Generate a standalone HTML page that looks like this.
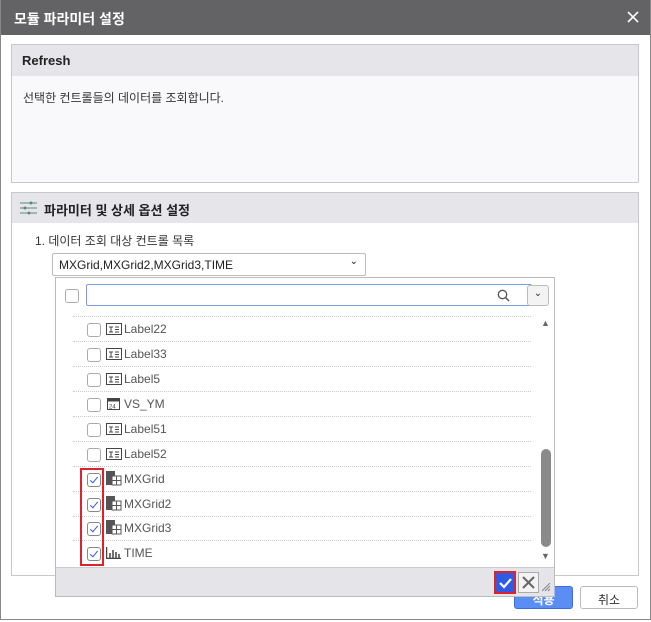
<!DOCTYPE html>
<html><head><meta charset="utf-8"><style>
*{box-sizing:border-box;margin:0;padding:0}
body{width:651px;height:622px;background:#fff;font-family:"Liberation Sans","Noto Sans CJK KR",sans-serif;font-size:12px;color:#333;position:relative;overflow:hidden}
.abs{position:absolute}
.title{left:0;top:0;width:651px;height:35px;background:#636365;color:#fff;font-size:14px;font-weight:bold;padding:9px 0 0 14px}
.frame{left:0;top:0;width:651px;height:620px;border:1px solid #888;border-top:none}
.box{border:1px solid #c8c8cc;background:#f9f9fb}
.hdr{background:#e6e5ea;font-weight:bold;font-size:13px;color:#222}
.cb{width:14px;height:14px;border:1px solid #aaa;border-radius:3px;background:#fff}
.row{left:73px;width:458px;height:25px;border-bottom:1px dotted #ccc}
.row .cb{position:absolute;left:14px;top:6px}
.row span{position:absolute;left:51px;top:5px;font-size:12px;color:#555}
.ico{position:absolute;left:33px;top:6px;width:16px;height:12px}
.ck{border-color:#888}
.ck::after{content:"";position:absolute;left:4px;top:1px;width:3px;height:7px;border:solid #2d5be3;border-width:0 1.6px 1.6px 0;transform:rotate(40deg)}
</style></head><body>
<div class="abs title">모듈 파라미터 설정<svg style="position:absolute;right:12px;top:11px" width="12" height="12"><path d="M1 1l10 10M11 1L1 11" stroke="#fff" stroke-width="1.6"/></svg></div>
<div class="abs frame"></div>

<div class="abs box" style="left:11px;top:44px;width:628px;height:139px"></div>
<div class="abs hdr" style="left:12px;top:45px;width:626px;height:31px;padding:8px 0 0 10px">Refresh</div>
<div class="abs" style="left:23px;top:89px">선택한 컨트롤들의 데이터를 조회합니다.</div>

<div class="abs box" style="left:11px;top:192px;width:628px;height:384px;background:#fff"></div>
<div class="abs hdr" style="left:12px;top:193px;width:626px;height:30px;padding:7px 0 0 32px">파라미터 및 상세 옵션 설정</div>
<svg class="abs" style="left:20px;top:201px" width="17" height="14"><g stroke="#5a8a7a" stroke-width="1"><line x1="0" y1="2" x2="17" y2="2"/><line x1="0" y1="7" x2="17" y2="7"/><line x1="0" y1="12" x2="17" y2="12"/></g><g fill="#5a8a7a"><circle cx="11" cy="2" r="1.5"/><circle cx="5" cy="7" r="1.5"/><circle cx="9" cy="12" r="1.5"/></g></svg>
<div class="abs" style="left:35px;top:232px">1. 데이터 조회 대상 컨트롤 목록</div>
<div class="abs" style="left:52px;top:253px;width:314px;height:23px;border:1px solid #bbb;border-radius:2px;padding:4px 0 0 6px;color:#222">MXGrid,MXGrid2,MXGrid3,TIME<span style="position:absolute;right:7px;top:2px;font-size:10px">⌄</span></div>

<div class="abs" style="left:514px;top:586px;width:59px;height:23px;background:#5b8ef5;border:1px solid #3a6ee0;border-radius:3px;color:#fff;text-align:center;padding-top:4px;font-weight:bold">적용</div>
<div class="abs" style="left:580px;top:586px;width:58px;height:23px;border:1px solid #bbb;border-radius:3px;text-align:center;padding-top:4px">취소</div>

<div class="abs" style="left:55px;top:277px;width:500px;height:320px;background:#fff;border:1px solid #bbb"></div>
<div class="abs cb" style="left:65px;top:289px"></div>
<div class="abs" style="left:86px;top:284px;width:446px;height:22px;border:1px solid #7b9be6;border-radius:2px"></div>
<svg class="abs" style="left:497px;top:289px" width="13" height="13"><circle cx="5.5" cy="5.5" r="4.2" fill="none" stroke="#555" stroke-width="1.3"/><line x1="8.5" y1="8.5" x2="12" y2="12" stroke="#555" stroke-width="1.5"/></svg>
<div class="abs" style="left:527px;top:285px;width:22px;height:21px;border:1px solid #bbb;border-radius:3px;background:#f3f3f3;text-align:center;font-size:10px;line-height:16px">⌄</div>
<div class="abs" style="left:73px;top:316px;width:458px;border-top:1px dotted #ccc"></div>

<div class="abs row" style="top:317px"><div class="cb"></div><svg class="ico"><rect x="0.5" y="0.5" width="15" height="11" fill="none" stroke="#444"/><path d="M3 4h4M5 4v5M3 9h4M9 4h4M9 6.5h4M9 9h4" stroke="#444"/></svg><span>Label22</span></div>
<div class="abs row" style="top:342px"><div class="cb"></div><svg class="ico"><rect x="0.5" y="0.5" width="15" height="11" fill="none" stroke="#444"/><path d="M3 4h4M5 4v5M3 9h4M9 4h4M9 6.5h4M9 9h4" stroke="#444"/></svg><span>Label33</span></div>
<div class="abs row" style="top:367px"><div class="cb"></div><svg class="ico"><rect x="0.5" y="0.5" width="15" height="11" fill="none" stroke="#444"/><path d="M3 4h4M5 4v5M3 9h4M9 4h4M9 6.5h4M9 9h4" stroke="#444"/></svg><span>Label5</span></div>
<div class="abs row" style="top:392px"><div class="cb"></div><svg class="ico" style="top:4px;height:15px"><rect x="1.5" y="2.5" width="12" height="11" fill="none" stroke="#444"/><rect x="1.5" y="2.5" width="12" height="3" fill="#444"/><text x="3" y="12.5" font-size="6" fill="#444" font-family="Liberation Sans">24</text></svg><span>VS_YM</span></div>
<div class="abs row" style="top:417px"><div class="cb"></div><svg class="ico"><rect x="0.5" y="0.5" width="15" height="11" fill="none" stroke="#444"/><path d="M3 4h4M5 4v5M3 9h4M9 4h4M9 6.5h4M9 9h4" stroke="#444"/></svg><span>Label51</span></div>
<div class="abs row" style="top:442px"><div class="cb"></div><svg class="ico"><rect x="0.5" y="0.5" width="15" height="11" fill="none" stroke="#444"/><path d="M3 4h4M5 4v5M3 9h4M9 4h4M9 6.5h4M9 9h4" stroke="#444"/></svg><span>Label52</span></div>
<div class="abs row" style="top:467px"><div class="cb ck"></div><svg class="ico" style="top:4px;height:15px"><rect x="0" y="0" width="9" height="14" fill="#555"/><rect x="6" y="5" width="9" height="9" fill="#fff" stroke="#555"/><path d="M6 9.5h9M10.5 5v9" stroke="#555"/></svg><span>MXGrid</span></div>
<div class="abs row" style="top:492px"><div class="cb ck"></div><svg class="ico" style="top:4px;height:15px"><rect x="0" y="0" width="9" height="14" fill="#555"/><rect x="6" y="5" width="9" height="9" fill="#fff" stroke="#555"/><path d="M6 9.5h9M10.5 5v9" stroke="#555"/></svg><span>MXGrid2</span></div>
<div class="abs row" style="top:516px"><div class="cb ck"></div><svg class="ico" style="top:4px;height:15px"><rect x="0" y="0" width="9" height="14" fill="#555"/><rect x="6" y="5" width="9" height="9" fill="#fff" stroke="#555"/><path d="M6 9.5h9M10.5 5v9" stroke="#555"/></svg><span>MXGrid3</span></div>
<div class="abs row" style="top:541px;border:none"><div class="cb ck"></div><svg class="ico"><path d="M0.5 0v11.5H15M4 11V6M7 11V3M10 11V5M13 11V7" stroke="#444" stroke-width="1.5" fill="none"/></svg><span>TIME</span></div>

<div class="abs" style="left:80px;top:468px;width:24px;height:98px;border:2px solid #e0202a"></div>
<div class="abs" style="left:541px;top:318px;font-size:9px;color:#666">▲</div>
<div class="abs" style="left:541px;top:449px;width:10px;height:98px;background:#8a8a8a;border-radius:5px"></div>
<div class="abs" style="left:541px;top:551px;font-size:9px;color:#666">▼</div>

<div class="abs" style="left:56px;top:567px;width:498px;height:29px;background:#e4e4e9;border-top:1px solid #ccc"></div>
<div class="abs" style="left:494px;top:571px;width:22px;height:23px;border:2px solid #e0202a;background:#2d5be3"><svg width="18" height="19"><path d="M4 10l4 4 7-8" stroke="#fff" stroke-width="2.2" fill="none"/></svg></div>
<div class="abs" style="left:518px;top:572px;width:21px;height:21px;border:1px solid #aaa;background:#f3f3f3"><svg width="19" height="19"><path d="M4 4l11 11M15 4L4 15" stroke="#666" stroke-width="2"/></svg></div>
<svg class="abs" style="left:542px;top:583px" width="9" height="9"><path d="M0 8L8 0M3 8L8 3M6 8L8 6" stroke="#888"/></svg>
</body></html>
